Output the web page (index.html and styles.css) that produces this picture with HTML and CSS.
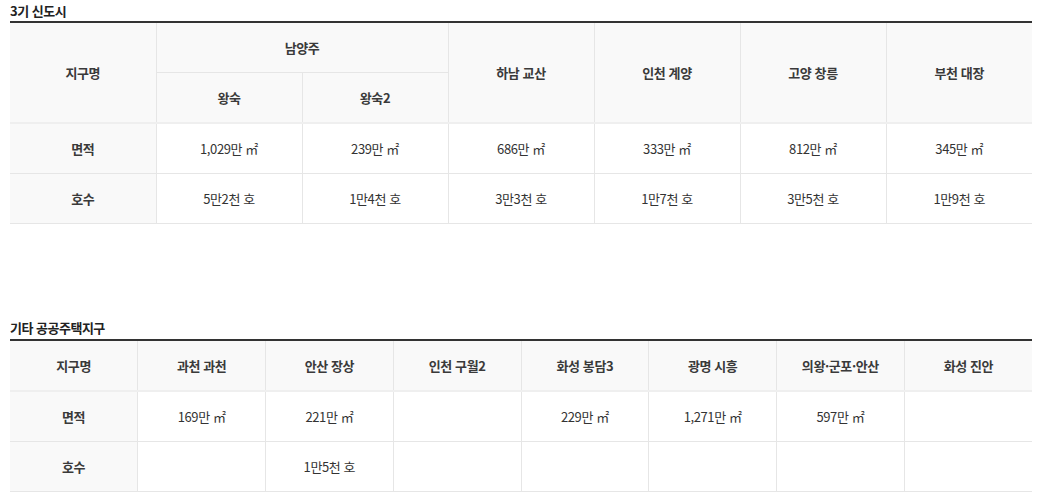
FILE: index.html
```html
<!DOCTYPE html>
<html lang="ko">
<head>
<meta charset="utf-8">
<link rel="stylesheet" href="styles.css">
</head>
<body>
<div class="page">
  <section class="block">
    <h3 class="title">3기 신도시</h3>
    <table class="grid grid-7">
      <thead>
        <tr class="r1">
          <th rowspan="2">지구명</th>
          <th colspan="2">남양주</th>
          <th rowspan="2">하남 교산</th>
          <th rowspan="2">인천 계양</th>
          <th rowspan="2">고양 창릉</th>
          <th rowspan="2">부천 대장</th>
        </tr>
        <tr class="r2">
          <th>왕숙</th>
          <th>왕숙2</th>
        </tr>
      </thead>
      <tbody>
        <tr>
          <th class="label">면적</th>
          <td>1,029만 ㎡</td>
          <td>239만 ㎡</td>
          <td>686만 ㎡</td>
          <td>333만 ㎡</td>
          <td>812만 ㎡</td>
          <td>345만 ㎡</td>
        </tr>
        <tr>
          <th class="label">호수</th>
          <td>5만2천 호</td>
          <td>1만4천 호</td>
          <td>3만3천 호</td>
          <td>1만7천 호</td>
          <td>3만5천 호</td>
          <td>1만9천 호</td>
        </tr>
      </tbody>
    </table>
  </section>

  <section class="block block-2">
    <h3 class="title">기타 공공주택지구</h3>
    <table class="grid grid-8">
      <thead>
        <tr>
          <th>지구명</th>
          <th>과천 과천</th>
          <th>안산 장상</th>
          <th>인천 구월2</th>
          <th>화성 봉담3</th>
          <th>광명 시흥</th>
          <th>의왕·군포·안산</th>
          <th>화성 진안</th>
        </tr>
      </thead>
      <tbody>
        <tr>
          <th class="label">면적</th>
          <td>169만 ㎡</td>
          <td>221만 ㎡</td>
          <td></td>
          <td>229만 ㎡</td>
          <td>1,271만 ㎡</td>
          <td>597만 ㎡</td>
          <td></td>
        </tr>
        <tr>
          <th class="label">호수</th>
          <td></td>
          <td>1만5천 호</td>
          <td></td>
          <td></td>
          <td></td>
          <td></td>
          <td></td>
        </tr>
      </tbody>
    </table>
  </section>
</div>
</body>
</html>
```

FILE: styles.css
```css
html, body {
  margin: 0;
  padding: 0;
  background: #fff;
}
body {
  font-family: "Noto Sans CJK KR", "Noto Sans", sans-serif;
  color: #333;
  font-size: 13px;
}
.page {
  padding: 0 5px 0 10px;
  width: 1022px;
}
.title {
  margin: 0;
  height: 21px;
  line-height: 22px;
  font-size: 13px;
  font-weight: 700;
  color: #222;
  letter-spacing: -0.5px;
}
.block-2 {
  margin-top: 96px;
}
.block-2 .title {
  height: 19px;
  line-height: 16px;
}
.grid {
  width: 100%;
  border-collapse: collapse;
  table-layout: fixed;
  border-top: 2px solid #333;
}
.grid th,
.grid td {
  border: 1px solid #e6e6e6;
  text-align: center;
  vertical-align: middle;
  padding: 0;
  height: 49px;
  letter-spacing: -0.4px;
}
.grid tr > :first-child {
  border-left: none;
}
.grid tr > :last-child {
  border-right: none;
}
.grid thead tr:first-child > * {
  border-top: none;
}
.grid th {
  background: #f9f9f9;
  font-weight: 700;
  color: #3a3a3a;
}
.grid td {
  background: #fff;
  font-weight: 400;
  color: #333;
}
.grid thead {
  border-bottom: 2px solid #efefef;
}
```
